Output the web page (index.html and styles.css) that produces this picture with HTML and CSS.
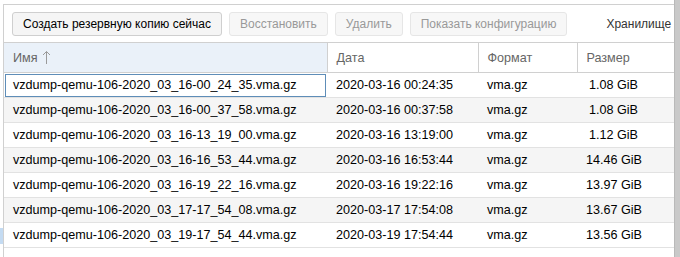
FILE: index.html
```html
<!DOCTYPE html>
<html lang="ru">
<head>
    <meta charset="UTF-8">
    <title>Резервные копии</title>
    <link rel="stylesheet" href="styles.css">
</head>
<body>
    <div class="screen">
        <div class="tree-edge"><div class="tree-selected"></div></div>

        <div class="panel">
            <div class="toolbar">
                <button class="btn">Создать резервную копию сейчас</button>
                <button class="btn disabled">Восстановить</button>
                <button class="btn disabled">Удалить</button>
                <button class="btn disabled">Показать конфигурацию</button>
                <span class="storage-label">Хранилище</span>
            </div>

            <table class="grid">
                <colgroup>
                    <col class="col-name">
                    <col class="col-date">
                    <col class="col-format">
                    <col class="col-size">
                </colgroup>
                <thead>
                    <tr>
                        <th class="sorted">Имя
                            <svg class="arrow" width="9" height="14" viewBox="0 0 9 14">
                                <path d="M4.5 1.5V14M1 5l3.5-3.5L8 5" fill="none" stroke="#9a9a9a" stroke-width="1"/>
                            </svg>
                        </th>
                        <th>Дата</th>
                        <th>Формат</th>
                        <th>Размер</th>
                    </tr>
                </thead>
                <tbody>
                    <tr>
                        <td class="focused">vzdump-qemu-106-2020_03_16-00_24_35.vma.gz</td>
                        <td>2020-03-16 00:24:35</td>
                        <td>vma.gz</td>
                        <td class="num">1.08 GiB</td>
                    </tr>
                    <tr>
                        <td>vzdump-qemu-106-2020_03_16-00_37_58.vma.gz</td>
                        <td>2020-03-16 00:37:58</td>
                        <td>vma.gz</td>
                        <td class="num">1.08 GiB</td>
                    </tr>
                    <tr>
                        <td>vzdump-qemu-106-2020_03_16-13_19_00.vma.gz</td>
                        <td>2020-03-16 13:19:00</td>
                        <td>vma.gz</td>
                        <td class="num">1.12 GiB</td>
                    </tr>
                    <tr>
                        <td>vzdump-qemu-106-2020_03_16-16_53_44.vma.gz</td>
                        <td>2020-03-16 16:53:44</td>
                        <td>vma.gz</td>
                        <td class="num">14.46 GiB</td>
                    </tr>
                    <tr>
                        <td>vzdump-qemu-106-2020_03_16-19_22_16.vma.gz</td>
                        <td>2020-03-16 19:22:16</td>
                        <td>vma.gz</td>
                        <td class="num">13.97 GiB</td>
                    </tr>
                    <tr>
                        <td>vzdump-qemu-106-2020_03_17-17_54_08.vma.gz</td>
                        <td>2020-03-17 17:54:08</td>
                        <td>vma.gz</td>
                        <td class="num">13.67 GiB</td>
                    </tr>
                    <tr>
                        <td>vzdump-qemu-106-2020_03_19-17_54_44.vma.gz</td>
                        <td>2020-03-19 17:54:44</td>
                        <td>vma.gz</td>
                        <td class="num">13.56 GiB</td>
                    </tr>
                </tbody>
            </table>
        </div>

        <div class="scrollbar"></div>
    </div>
</body>
</html>
```

FILE: styles.css
```css
/* Page */
body {
    margin: 0;
    background: #fff;
    font-family: "Liberation Sans", Arial, sans-serif;
    font-size: 12.6px;
    color: #000;
    overflow: hidden;
}

.screen {
    display: flex;
    height: 257px;
}

/* Cut-off tree on the left */
.tree-edge {
    width: 3px;
    flex-shrink: 0;
}

.tree-selected {
    margin-top: 228px;
    height: 16px;
    background: #c4dbf2;
}

/* Main panel */
.panel {
    flex: 1;
    min-width: 0;
    margin-top: 4px;
    border-top: 1px solid #d0d0d0;
    border-left: 1px solid #d0d0d0;
    overflow: hidden;
}

/* Toolbar */
.toolbar {
    display: flex;
    align-items: center;
    gap: 7px;
    height: 37px;
    padding: 0 0 0 8px;
    white-space: nowrap;
}

.btn {
    flex-shrink: 0;
    height: 24px;
    padding: 0 10px;
    font-family: inherit;
    font-size: 12px;
    color: #000;
    background: #f5f5f5;
    border: 1px solid #cfcfcf;
    border-radius: 3px;
    margin-top: 1px;
}

.btn.disabled {
    color: #999;
    background: #f7f7f7;
    border-color: #e6e6e6;
}

.storage-label {
    flex-shrink: 0;
    margin-left: 32px;
    font-size: 12px;
    color: #333;
}

/* Grid */
.grid {
    border-collapse: collapse;
    table-layout: fixed;
    width: 671px;
}

.col-name { width: 323px; }
.col-date { width: 151px; }
.col-format { width: 99px; }
.col-size { width: 98px; }

.grid th {
    height: 29px;
    padding: 0 9px;
    text-align: left;
    font-weight: normal;
    color: #666;
    border-top: 1px solid #d0d0d0;
    border-bottom: 1px solid #d0d0d0;
    border-right: 1px solid #d0d0d0;
}

.grid th.sorted {
    background: #eaf1f9;
}

.arrow {
    vertical-align: -2px;
    margin-left: 1px;
}

.grid td {
    height: 24px;
    padding: 0 9px;
    white-space: nowrap;
    overflow: hidden;
    border-bottom: 1px solid #e2e2e2;
}

.grid tbody tr:nth-child(even) td {
    background: #f5f5f5;
}

.grid td.focused {
    outline: 1px solid #5e8db8;
    outline-offset: -2px;
}

.grid td.num {
    text-align: right;
    padding-right: 37px;
}

/* Right-hand scrollbar strip */
.scrollbar {
    width: 5px;
    flex-shrink: 0;
    background: #c9c9c9;
    border-left: 1px solid #b9b9b9;
}
```
